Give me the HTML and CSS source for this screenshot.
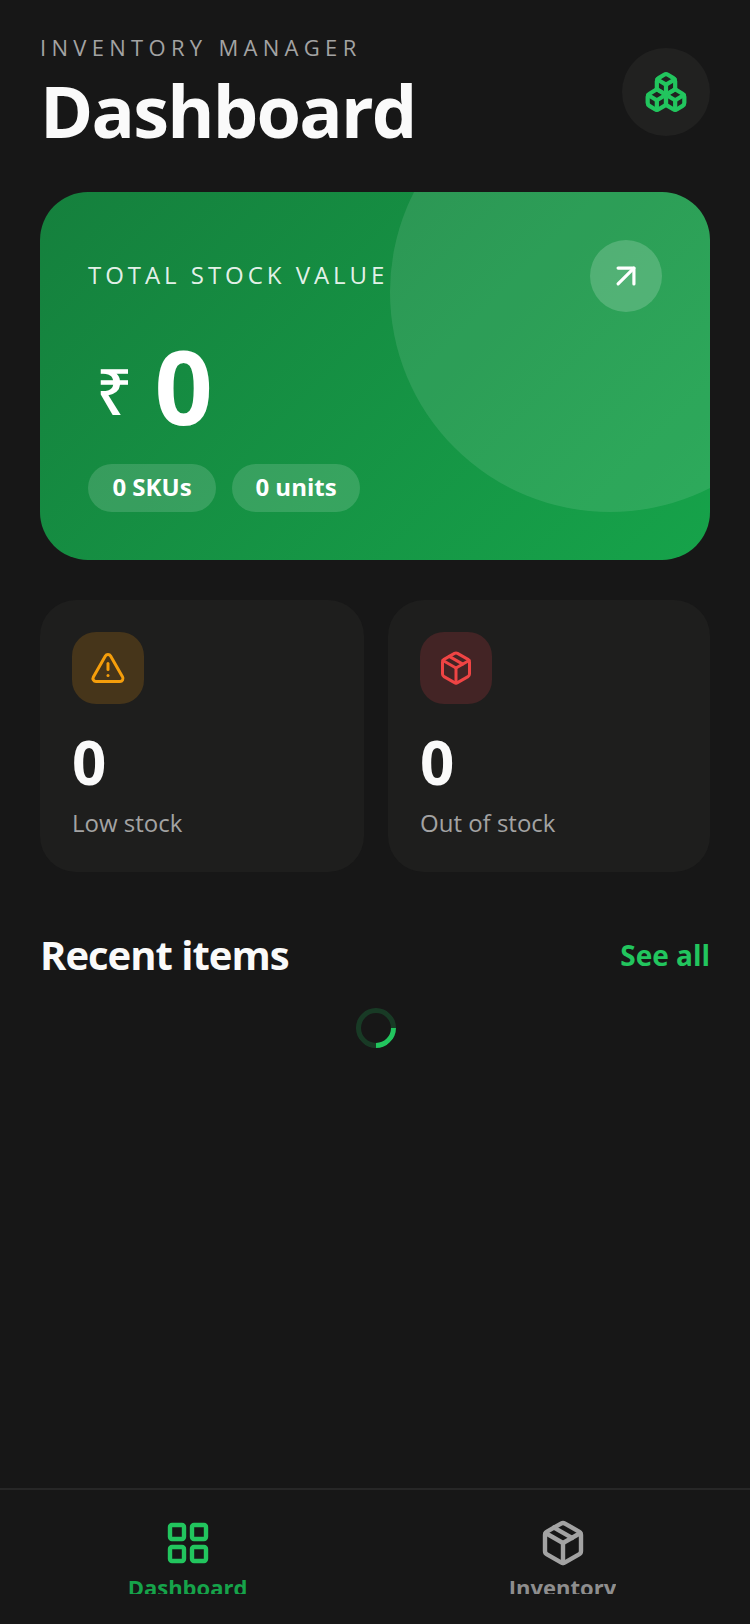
FILE: index.html
```html
<!DOCTYPE html>
<html lang="en">
<head>
<meta charset="utf-8">
<title>Dashboard</title>
<link rel="stylesheet" href="styles.css">
</head>
<body>
<div class="app">
  <main class="main">
    <header class="header">
      <div class="header-text">
        <div class="eyebrow">INVENTORY MANAGER</div>
        <h1 class="title">Dashboard</h1>
      </div>
      <div class="logo">
        <svg class="ico ico-logo" viewBox="0 0 24 24"><path d="M2.97 12.92A2 2 0 0 0 2 14.63v3.24a2 2 0 0 0 .97 1.71l3 1.8a2 2 0 0 0 2.06 0L12 19v-5.5l-5-3-4.03 2.42Z"/><path d="m7 16.5-4.74-2.85"/><path d="m7 16.5 5-3"/><path d="M7 16.5v5.17"/><path d="M12 13.5V19l3.97 2.38a2 2 0 0 0 2.06 0l3-1.8a2 2 0 0 0 .97-1.71v-3.24a2 2 0 0 0-.97-1.71L17 10.5l-5 3Z"/><path d="m17 16.5-5-3"/><path d="m17 16.5 4.74-2.85"/><path d="M17 16.5v5.17"/><path d="M7.97 4.42A2 2 0 0 0 7 6.13v4.37l5 3 5-3V6.13a2 2 0 0 0-.97-1.71l-3-1.8a2 2 0 0 0-2.06 0l-3 1.8Z"/><path d="M12 8 7.26 5.15"/><path d="m12 8 4.74-2.85"/><path d="M12 13.5V8"/></svg>
      </div>
    </header>

    <section class="hero">
      <div class="hero-deco"></div>
      <div class="hero-top">
        <div class="hero-label">TOTAL STOCK VALUE</div>
        <div class="hero-arrow">
          <svg class="ico ico-arrow" viewBox="0 0 24 24"><path d="M7 7h10v10"/><path d="M7 17 17 7"/></svg>
        </div>
      </div>
      <div class="hero-value"><span class="currency">₹</span><span class="amount">0</span></div>
      <div class="chips">
        <span class="chip">0 SKUs</span>
        <span class="chip">0 units</span>
      </div>
    </section>

    <section class="stats">
      <div class="stat">
        <div class="stat-icon stat-icon-amber">
          <svg class="ico ico-stat" viewBox="0 0 24 24"><path d="m21.73 18-8-14a2 2 0 0 0-3.48 0l-8 14A2 2 0 0 0 4 21h16a2 2 0 0 0 1.73-3"/><path d="M12 9v4"/><path d="M12 17h.01"/></svg>
        </div>
        <div class="stat-num">0</div>
        <div class="stat-label">Low stock</div>
      </div>
      <div class="stat">
        <div class="stat-icon stat-icon-red">
          <svg class="ico ico-stat" viewBox="0 0 24 24"><path d="M11 21.73a2 2 0 0 0 2 0l7-4A2 2 0 0 0 21 16V8a2 2 0 0 0-1-1.73l-7-4a2 2 0 0 0-2 0l-7 4A2 2 0 0 0 3 8v8a2 2 0 0 0 1 1.73z"/><path d="M12 22V12"/><polyline points="3.29 7 12 12 20.71 7"/><path d="m7.5 4.27 9 5.15"/></svg>
        </div>
        <div class="stat-num">0</div>
        <div class="stat-label">Out of stock</div>
      </div>
    </section>

    <div class="section-head">
      <h2 class="section-title">Recent items</h2>
      <span class="see-all">See all</span>
    </div>
    <div class="spinner-wrap"><div class="spinner"></div></div>
  </main>

  <nav class="nav">
    <div class="nav-item nav-active">
      <svg class="ico ico-nav" viewBox="0 0 24 24"><rect x="3" y="3" width="7" height="7" rx="1"/><rect x="14" y="3" width="7" height="7" rx="1"/><rect x="14" y="14" width="7" height="7" rx="1"/><rect x="3" y="14" width="7" height="7" rx="1"/></svg>
      <div class="nav-clip"><span class="nav-label">Dashboard</span></div>
    </div>
    <div class="nav-item">
      <svg class="ico ico-nav" viewBox="0 0 24 24"><path d="M11 21.73a2 2 0 0 0 2 0l7-4A2 2 0 0 0 21 16V8a2 2 0 0 0-1-1.73l-7-4a2 2 0 0 0-2 0l-7 4A2 2 0 0 0 3 8v8a2 2 0 0 0 1 1.73z"/><path d="M12 22V12"/><polyline points="3.29 7 12 12 20.71 7"/><path d="m7.5 4.27 9 5.15"/></svg>
      <div class="nav-clip"><span class="nav-label">Inventory</span></div>
    </div>
  </nav>
</div>
</body>
</html>
```
FILE: styles.css
```css
* { box-sizing: border-box; margin: 0; padding: 0; }
html, body { height: 100%; background: #171717; }
body { font-family: "Open Sans", "Noto Sans", sans-serif; color: #fafafa; }
.app { height: 1624px; display: flex; flex-direction: column; overflow: hidden; }
.main { flex: 1; padding: 32px 40px 0; min-height: 0; }

.ico { display: block; fill: none; stroke: currentColor; stroke-width: 2; stroke-linecap: round; stroke-linejoin: round; }

.header { display: flex; justify-content: space-between; align-items: flex-start; height: 128px; }
.eyebrow { font-size: 22px; line-height: 30px; letter-spacing: 5.3px; color: #a3a3a3; font-weight: 400; }
.title { font-size: 72px; line-height: 80px; font-weight: 700; letter-spacing: -1.8px; color: #fafafa; margin-top: 8px; }
.logo { width: 88px; height: 88px; border-radius: 50%; background: #212120; display: flex; align-items: center; justify-content: center; color: #22c55e; margin-top: 16px; }
.ico-logo { width: 44px; height: 44px; stroke-width: 2.3; }

.hero { position: relative; overflow: hidden; margin-top: 32px; height: 368px; border-radius: 48px; padding: 48px; background: linear-gradient(135deg, #15803d, #16a34a); }
.hero-deco { position: absolute; top: -120px; right: -120px; width: 440px; height: 440px; border-radius: 50%; background: rgba(255,255,255,.1); }
.hero-top { position: relative; display: flex; justify-content: space-between; align-items: center; height: 72px; }
.hero-label { font-size: 24px; letter-spacing: 3.96px; color: rgba(255,255,255,.9); line-height: 32px; margin-top: -2px; }
.hero-arrow { width: 72px; height: 72px; border-radius: 50%; background: rgba(255,255,255,.18); display: flex; align-items: center; justify-content: center; color: #fff; }
.ico-arrow { width: 38px; height: 38px; }
.hero-value { position: relative; display: flex; align-items: flex-end; gap: 22px; margin-top: 16px; height: 120px; padding-left: 8px; }
.currency { font-size: 64px; line-height: 114px; font-weight: 500; color: #fff; }
.amount { font-size: 102px; line-height: 124px; font-weight: 700; color: #fff; }
.chips { position: relative; display: flex; gap: 16px; margin-top: 16px; }
.chip { width: 128px; height: 48px; border-radius: 24px; background: rgba(255,255,255,.15); font-size: 24px; font-weight: 700; line-height: 46px; text-align: center; color: #fff; }

.stats { display: grid; grid-template-columns: 324fr 322fr; column-gap: 24px; margin-top: 40px; }
.stat { height: 272px; border-radius: 36px; background: #1e1e1d; padding: 32px; }
.stat-icon { width: 72px; height: 72px; border-radius: 24px; display: flex; align-items: center; justify-content: center; }
.stat-icon-amber { background: #46351a; color: #f59e0b; }
.stat-icon-red { background: #432425; color: #ef4444; }
.ico-stat { width: 36px; height: 36px; }
.stat-num { font-size: 60px; line-height: 64px; font-weight: 700; color: #fafafa; margin-top: 26px; }
.stat-label { font-size: 24px; line-height: 32px; color: #a3a3a3; margin-top: 13px; }

.section-head { display: flex; justify-content: space-between; align-items: center; margin-top: 55px; height: 56px; }
.section-title { font-size: 40px; line-height: 56px; font-weight: 700; letter-spacing: -1px; color: #fafafa; }
.see-all { font-size: 28px; font-weight: 700; color: #22c55e; }
.spinner-wrap { display: flex; justify-content: center; margin-top: 25px; padding-left: 2px; }
.spinner { width: 40px; height: 40px; border-radius: 50%; border: 5px solid rgba(34,197,94,.2); border-right-color: #22c55e; transform: rotate(45deg); }

.nav { height: 136px; flex: none; border-top: 2px solid #272727; background: #171717; display: flex; padding-top: 29px; }
.nav-item { flex: 1; display: flex; flex-direction: column; align-items: center; color: #a3a3a3; }
.nav-active { color: #22c55e; }
.ico-nav { width: 48px; height: 48px; stroke-width: 2.2; }
.nav-clip { height: 23px; overflow: hidden; margin-top: 4px; }
.nav-label { display: block; font-size: 22px; line-height: 32px; font-weight: 700; opacity: .85; }
.nav-active .nav-label { color: #16a34a; opacity: 1; }
```
